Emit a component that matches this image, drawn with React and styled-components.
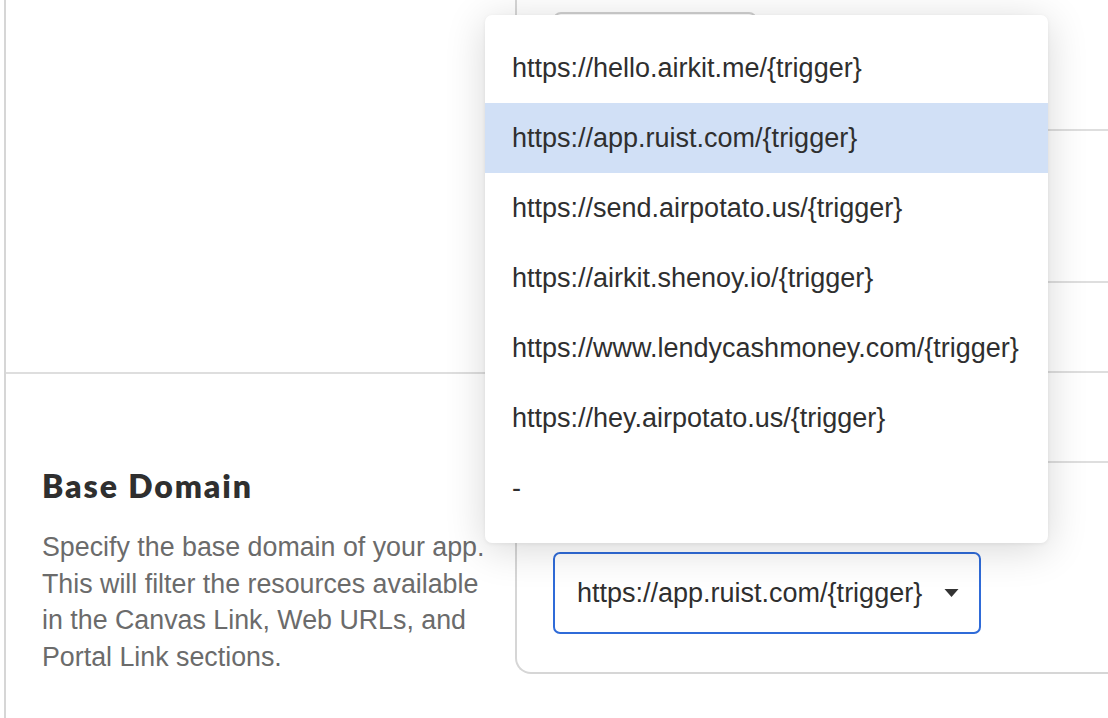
import React from 'react';
import styled, { createGlobalStyle } from 'styled-components';

const GlobalStyle = createGlobalStyle`
  html, body {
    margin: 0;
    padding: 0;
    background: #ffffff;
    overflow: hidden;
  }
  body {
    font-family: "Liberation Sans", Arial, sans-serif;
  }
`

const options = [
  'https://hello.airkit.me/{trigger}',
  'https://app.ruist.com/{trigger}',
  'https://send.airpotato.us/{trigger}',
  'https://airkit.shenoy.io/{trigger}',
  'https://www.lendycashmoney.com/{trigger}',
  'https://hey.airpotato.us/{trigger}',
  '-',
]

const selected = 'https://app.ruist.com/{trigger}'

function App() {
  return (
    <>
      <GlobalStyle />
      <Page>
        <LeftColumn>
          <TopCell />
          <BottomCell>
            <Heading>Base Domain</Heading>
            <Description>
              Specify the base domain of your app. This will filter the resources available
              in the Canvas Link, Web URLs, and Portal Link sections.
            </Description>
          </BottomCell>
        </LeftColumn>
        <Panel>
          <Row $height={131}>
            <GhostButton />
          </Row>
          <Row $height={152} />
          <Row $height={90} />
          <Row $height={90} />
          <LastRow>
            <Select>
              <span>{selected}</span>
              <Caret viewBox="0 0 14 8">
                <path d="M0 0 L14 0 L7 8 Z" fill="#333" />
              </Caret>
            </Select>
          </LastRow>
        </Panel>
        <Menu>
          {options.map(o => (
            <MenuItem key={o} $active={o === selected}>{o}</MenuItem>
          ))}
        </Menu>
      </Page>
    </>
  )
}

const Page = styled.div`
  position: relative;
  margin-left: 4px;
  border-left: 2px solid #d6d6d6;
  display: grid;
  grid-template-columns: 509px 700px;
  height: 718px;
`

const LeftColumn = styled.div`
  display: flex;
  flex-direction: column;
`

const TopCell = styled.div`
  height: 372px;
  border-bottom: 2px solid #dedede;
  flex-shrink: 0;
`

const BottomCell = styled.div`
  padding: 92px 0 0 36px;
`

const Heading = styled.h2`
  margin: 0;
  font-family: Lato, "Open Sans", sans-serif;
  font-weight: 800;
  font-size: 32px;
  line-height: 40px;
  color: #2f2f2f;
  letter-spacing: 1.9px;
`

const Description = styled.p`
  margin: 23px 0 0;
  width: 455px;
  font-family: "Liberation Sans", Arial, sans-serif;
  font-size: 26.8px;
  line-height: 36.7px;
  color: #6b6b6b;
`

const Panel = styled.div`
  height: 672px;
  border-left: 2px solid #d6d6d6;
  border-bottom: 2px solid #d6d6d6;
  border-bottom-left-radius: 16px;
  display: flex;
  flex-direction: column;
`

const Row = styled.div`
  height: ${p => p.$height}px;
  flex-shrink: 0;
  box-sizing: border-box;
  border-bottom: 2px solid #dedede;
  padding: 12px 0 0 36px;
`

const GhostButton = styled.div`
  width: 204px;
  height: 48px;
  border: 2px solid #d0d0d0;
  border-radius: 8px;
  box-sizing: border-box;
`

const LastRow = styled.div`
  flex: 1;
  padding: 89px 0 0 36px;
`

const Select = styled.div`
  box-sizing: border-box;
  width: 428px;
  height: 82px;
  border: 2px solid #2f6bd8;
  border-radius: 7px;
  display: flex;
  align-items: center;
  justify-content: space-between;
  padding: 0 20px 0 22px;
  font-size: 27px;
  color: #2f2f2f;
`

const Caret = styled.svg`
  width: 15px;
  height: 8px;
  flex-shrink: 0;
`

const Menu = styled.div`
  position: absolute;
  left: 479px;
  top: 15px;
  width: 563px;
  box-sizing: border-box;
  padding: 18px 0 20px;
  background: #ffffff;
  border-radius: 7px;
  box-shadow: 0 6px 40px rgba(0, 0, 0, 0.16), 0 1px 4px rgba(0, 0, 0, 0.06);
`

const MenuItem = styled.div`
  height: 70px;
  display: flex;
  align-items: center;
  padding-left: 27px;
  font-size: 27px;
  color: #2f2f2f;
  background: ${p => (p.$active ? '#d1e0f6' : 'transparent')};
`

export default App
